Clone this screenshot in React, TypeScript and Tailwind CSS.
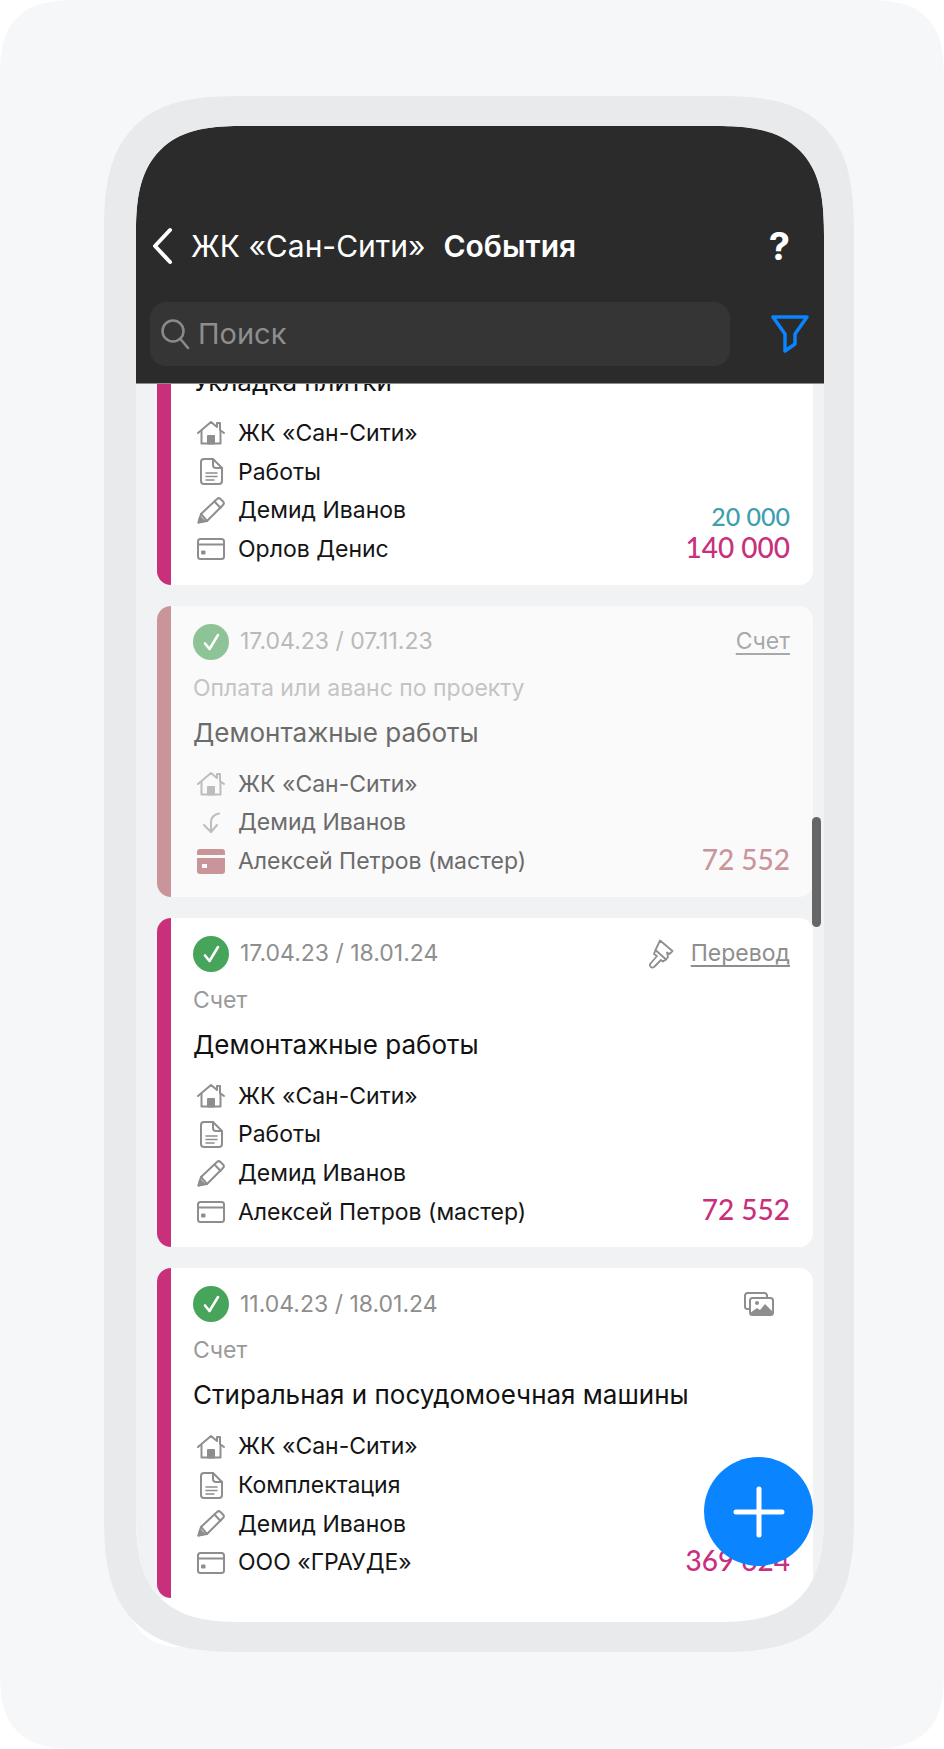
import type { ReactNode } from 'react'

const stroke = { fill: 'none', stroke: 'currentColor', strokeWidth: 2, strokeLinecap: 'round', strokeLinejoin: 'round' } as const

const HomeIcon = () => (
  <svg width="28" height="24" viewBox="0 0 28 24" {...stroke}>
    <path d="M1 12 14 1l6 5V2h3v7l4 3" />
    <path d="M4.500 10v12.500h19V10" />
    <path d="M11 22.500V15h6v7.500z" fill="currentColor" />
  </svg>
)

const DocIcon = () => (
  <svg width="23" height="27" viewBox="0 0 23 27" {...stroke}>
    <path d="M4 1h9l9 9v13a3 3 0 0 1-3 3H4a3 3 0 0 1-3-3V4a3 3 0 0 1 3-3z" />
    <path d="M13 1v6a3 3 0 0 0 3 3h6" />
    <path d="M6 15h11M6 18.500h11M6 22h8" strokeWidth="1.500" />
  </svg>
)

const PencilIcon = () => (
  <svg width="28" height="27" viewBox="0 0 28 27" {...stroke}>
    <path d="M1.500 25.500 4 17 20 2a2.500 2.500 0 0 1 3.500 0l2.500 2.500a2.500 2.500 0 0 1 0 3.500L10 24z" />
    <path d="M4 17l6 7M17.500 4.500l6 6.500" />
    <path d="M1.500 25.500 3 20l4 4z" fill="currentColor" />
  </svg>
)

const CardIcon = () => (
  <svg width="28" height="22" viewBox="0 0 28 22" {...stroke}>
    <rect x="1" y="1" width="26" height="20" rx="2.500" />
    <path d="M1 6.500h26" />
    <rect x="5" y="13" width="3" height="3" fill="currentColor" strokeWidth="1" />
  </svg>
)

const CardFilledIcon = () => (
  <svg width="28" height="25" viewBox="0 0 28 25">
    <path d="M3 0h22a3 3 0 0 1 3 3v3H0V3a3 3 0 0 1 3-3zM0 9h28v13a3 3 0 0 1-3 3H3a3 3 0 0 1-3-3zm5 6v4h5v-4z" fill="currentColor" fillRule="evenodd" />
  </svg>
)

const ReturnIcon = () => (
  <svg width="20" height="22" viewBox="0 0 20 22" {...stroke}>
    <path d="M18 1.500c-5 1-8 4-8 9v9" />
    <path d="M3 13l7 7 6-7" />
  </svg>
)

const BrushIcon = () => (
  <svg width="26" height="30" viewBox="0 0 26 30" {...stroke} strokeWidth="1.800">
    <path d="M12 1.500 24.500 12l-3 3-2.500-1.500 1 4.500-2 2.500L7.500 11z" />
    <path d="M7.500 11 6 15l3 2-6.500 7.500a2.500 2.500 0 0 0 3.500 3.500L13 21l2 1.500 3-2" />
  </svg>
)

const ImagesIcon = () => (
  <svg width="30" height="24" viewBox="0 0 30 24" {...stroke}>
    <path d="M5 17H3.500A2.500 2.500 0 0 1 1 14.500v-11A2.500 2.500 0 0 1 3.500 1h17A2.500 2.500 0 0 1 23 3.500V5" />
    <rect x="6" y="6" width="23" height="17" rx="2.500" />
    <circle cx="13" cy="11" r="2" fill="currentColor" stroke="none" />
    <path d="M6 21l7-5 3 2 5-6 8 8v1a2 2 0 0 1-2 2H8a2 2 0 0 1-2-2z" fill="currentColor" stroke="none" />
  </svg>
)

const Check = ({ muted }: { muted?: boolean }) => (
  <div className={`flex h-9 w-9 shrink-0 items-center justify-center rounded-full ${muted ? 'bg-[#8dc396]' : 'bg-[#47a45b]'}`}>
    <svg width="17" height="20" viewBox="0 0 17 20" fill="none" stroke="white" strokeWidth="2.600" strokeLinecap="round" strokeLinejoin="round">
      <path d="M2 11.500 6.500 17 15 3" />
    </svg>
  </div>
)

interface RowItem {
  icon: ReactNode
  text: string
}

interface EventCardProps {
  date?: string
  top?: ReactNode
  label?: string
  title: string
  rows: RowItem[]
  amount: string
  extra?: string
  muted?: boolean
  className?: string
}

const EventCard = ({ date, top, label, title, rows, amount, extra, muted, className = '' }: EventCardProps) => (
  <div className={`flex shrink-0 overflow-hidden rounded-[14px] ${muted ? 'bg-[#fafafa]' : 'bg-white'} ${className}`}>
    <div className={`w-[14px] shrink-0 ${muted ? 'bg-[#c9959b]' : 'bg-[#c8307c]'}`} />
    <div className="min-w-0 flex-1 pt-[18px] pr-[23px] pb-[16px] pl-[22px]">
      {date && (
        <div className="flex h-9 items-center justify-between">
          <div className="flex items-center gap-[11px]">
            <Check muted={muted} />
            <span className={`text-[23px] ${muted ? 'text-[#b9b9b9]' : 'text-[#8e8e8e]'}`}>{date}</span>
          </div>
          {top}
        </div>
      )}
      {label && (
        <div className={`mt-[14px] h-7 text-[23px] leading-7 ${muted ? 'text-[#c4c4c4]' : 'text-[#9a9a9a]'}`}>{label}</div>
      )}
      <div className={`mt-[14px] h-[34px] text-[26px] leading-[34px] ${muted ? 'text-[#6b6b6b]' : 'text-[#111]'}`}>{title}</div>
      <div className="mt-[15px] flex items-end justify-between">
        <div className="flex flex-col">
          {rows.map((row) => (
            <div key={row.text} className="flex h-[38.670px] items-center">
              <div className={`ml-1 flex w-[28px] justify-center ${muted ? 'text-[#bdbdbd]' : 'text-[#8e8e8e]'}`}>{row.icon}</div>
              <span className={`ml-[13px] text-[23px] ${muted ? 'text-[#6b6b6b]' : 'text-[#151515]'}`}>{row.text}</span>
            </div>
          ))}
        </div>
        <div className="flex flex-col items-end pb-[7px] font-[family-name:Lato,sans-serif] font-medium">
          {extra && <span className="text-[25px] leading-[31px] text-[#3f9fae]">{extra}</span>}
          <span className={`text-[28px] leading-[30px] ${muted ? 'text-[#c9959b]' : 'text-[#c8307c]'}`}>{amount}</span>
        </div>
      </div>
    </div>
  </div>
)

const TransferLink = ({ text, muted }: { text: string; muted?: boolean }) => (
  <span className={`text-[23px] underline underline-offset-4 ${muted ? 'text-[#a9a9a9]' : 'text-[#8e8e8e]'}`}>{text}</span>
)

export default function App() {
  return (
    <div className="h-[1749px] w-[944px] bg-white font-[family-name:Inter,sans-serif]">
      <div className="relative h-full rounded-[80px] bg-[#f6f7f9] pt-[96px] pl-[104px] [corner-shape:superellipse(1.5)]">
        {/* white shape peeking out behind the frame */}
        <div className="absolute top-[1500px] left-[128px] h-[147px] w-[682px] rounded-[48px] bg-white" />

        <div className="relative flex h-[1556px] w-[750px] flex-col overflow-hidden rounded-[140px] border-[30px] border-l-[32px] border-[#e9eaec] [corner-shape:superellipse(1.5)]">
          <div className="flex h-full flex-col overflow-hidden rounded-[110px] bg-[#f1f2f4] [corner-shape:superellipse(1.5)]">
            <header className="flex h-[258px] shrink-0 flex-col border-b border-[#8a8a8a] bg-[#2b2b2b] pt-[98px] pr-[14px] pl-[14px]">
              <div className="flex h-11 items-center">
                <svg width="24" height="38" viewBox="0 0 24 38" fill="none" stroke="white" strokeWidth="4" strokeLinecap="round" strokeLinejoin="round">
                  <path d="M20 3 5 19l15 16" />
                </svg>
                <span className="ml-[17px] text-[30px] text-white">ЖК «Сан-Сити»</span>
                <span className="ml-[18px] text-[30px] font-semibold text-white">События</span>
                <span className="mr-[20px] ml-auto text-[38px] leading-none font-bold text-white">?</span>
              </div>
              <div className="mt-[34px] flex items-center justify-between">
                <div className="flex h-16 w-[580px] items-center rounded-[16px] bg-[#353535] pl-[10px]">
                  <svg width="30" height="32" viewBox="0 0 30 32" fill="none" stroke="#8a8a8a" strokeWidth="2.500" strokeLinecap="round">
                    <circle cx="13" cy="13" r="10.500" />
                    <path d="M20.500 21 28 30" />
                  </svg>
                  <span className="ml-[8px] text-[29px] text-[#8e8e8e]">Поиск</span>
                </div>
                <svg width="38" height="38" viewBox="0 0 38 38" fill="none" stroke="#0a84ff" strokeWidth="3.500" strokeLinejoin="round" className="mr-[1px]">
                  <path d="M2 2h34L24 19v10l-10 7V19z" />
                </svg>
              </div>
            </header>

            <div className="relative flex min-h-0 flex-1 flex-col overflow-hidden">
              <div className="flex flex-col gap-[21px] pr-[11px] pl-[21px]">
                <EventCard
                  className="-mt-[51px]"
                  title="Укладка плитки"
                  amount="140 000"
                  extra="20 000"
                  rows={[
                    { icon: <HomeIcon />, text: 'ЖК «Сан-Сити»' },
                    { icon: <DocIcon />, text: 'Работы' },
                    { icon: <PencilIcon />, text: 'Демид Иванов' },
                    { icon: <CardIcon />, text: 'Орлов Денис' },
                  ]}
                />
                <EventCard
                  muted
                  date="17.04.23 / 07.11.23"
                  top={<TransferLink text="Счет" muted />}
                  label="Оплата или аванс по проекту"
                  title="Демонтажные работы"
                  amount="72 552"
                  rows={[
                    { icon: <HomeIcon />, text: 'ЖК «Сан-Сити»' },
                    { icon: <ReturnIcon />, text: 'Демид Иванов' },
                    { icon: <span className="text-[#c9959b]"><CardFilledIcon /></span>, text: 'Алексей Петров (мастер)' },
                  ]}
                />
                <EventCard
                  date="17.04.23 / 18.01.24"
                  top={
                    <div className="flex items-center gap-[17px] text-[#8e8e8e]">
                      <BrushIcon />
                      <TransferLink text="Перевод" />
                    </div>
                  }
                  label="Счет"
                  title="Демонтажные работы"
                  amount="72 552"
                  rows={[
                    { icon: <HomeIcon />, text: 'ЖК «Сан-Сити»' },
                    { icon: <DocIcon />, text: 'Работы' },
                    { icon: <PencilIcon />, text: 'Демид Иванов' },
                    { icon: <CardIcon />, text: 'Алексей Петров (мастер)' },
                  ]}
                />
                <EventCard
                  date="11.04.23 / 18.01.24"
                  top={<div className="mr-[16px] text-[#8e8e8e]"><ImagesIcon /></div>}
                  label="Счет"
                  title="Стиральная и посудомоечная машины"
                  amount="369 624"
                  rows={[
                    { icon: <HomeIcon />, text: 'ЖК «Сан-Сити»' },
                    { icon: <DocIcon />, text: 'Комплектация' },
                    { icon: <PencilIcon />, text: 'Демид Иванов' },
                    { icon: <CardIcon />, text: 'ООО «ГРАУДЕ»' },
                  ]}
                />
              </div>
              <div className="min-h-0 flex-1 bg-white" />

              <div className="absolute top-[433px] right-[3px] h-[110px] w-[9px] rounded-full bg-[#666]" />
              <button className="absolute right-[11px] bottom-[56px] flex h-[109px] w-[109px] items-center justify-center rounded-full bg-[#0a84ff]">
                <svg width="52" height="52" viewBox="0 0 52 52" stroke="white" strokeWidth="5" strokeLinecap="round">
                  <path d="M26 3v46M3 26h46" />
                </svg>
              </button>
            </div>
          </div>
        </div>
      </div>
    </div>
  )
}
